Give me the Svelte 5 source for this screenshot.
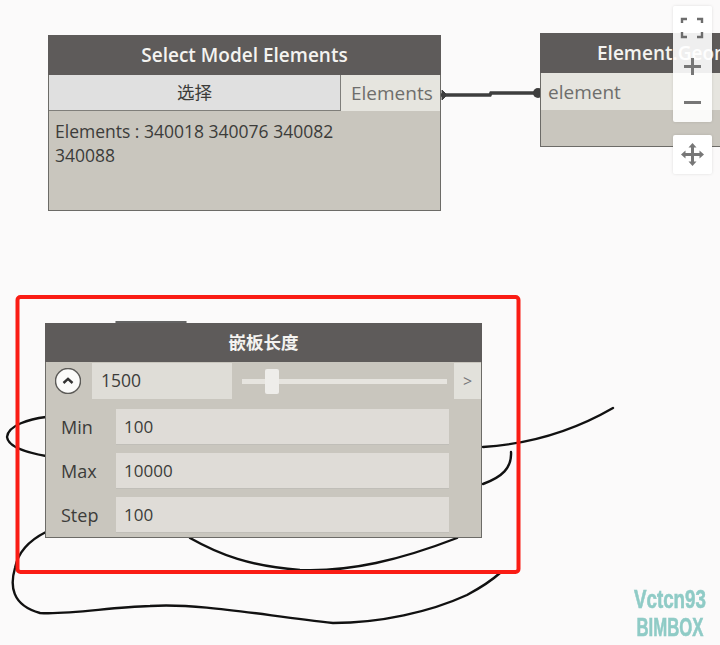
<script>
  let rows = [
    { label: 'Min', value: '100' },
    { label: 'Max', value: '10000' },
    { label: 'Step', value: '100' }
  ]
</script>

<main class="canvas">
  <svg class="ink" width="720" height="645" viewBox="0 0 720 645" fill="none">
    <g stroke="#111" stroke-width="2.4" stroke-linecap="round">
      <path d="M116 322 H186" stroke="#333" stroke-width="1.5" />
      <path d="M46 417 C30 419 8 425 7 437 C8 447 28 453 46 456" />
      <path d="M483 447 C530 444 575 430 613 408" />
      <path d="M511 452 C512 468 502 477 483 484" />
      <path d="M46 532 C30 540 18 552 15 568 C10 585 11 605 40 613 C70 615 110 607 150 606 C200 603 260 615 333 623 C380 623 430 612 467 595 C480 588 490 582 500 573" />
      <path d="M190 538 C220 555 250 566 300 570 C350 572 400 560 457 538" />
    </g>
    <g stroke="#3e3e3e" fill="#3e3e3e">
      <path d="M441 95 H490 L491 93 H540" stroke-width="3.5" />
      <path d="M442 90 L447 95 L442 100 Z" stroke-width="1" />
      <circle cx="538" cy="93" r="5" stroke="none" />
    </g>
    <rect x="17.5" y="297" width="501" height="275" rx="3" stroke="#fa1c14" stroke-width="4" />
  </svg>

  <section class="node select">
    <h2>Select Model Elements</h2>
    <div class="ports">
      <button class="pick">选择</button>
      <span class="port out">Elements</span>
    </div>
    <p class="preview">Elements : 340018 340076 340082<br />340088</p>
  </section>

  <section class="node geometry">
    <h2>Element.Geometry</h2>
    <div class="ports">
      <span class="port in">element</span>
    </div>
  </section>

  <section class="node slider">
    <h2>嵌板长度</h2>
    <div class="slide-row">
      <span class="toggle">
        <svg width="26" height="26" viewBox="0 0 26 26">
          <circle cx="13" cy="13" r="12.5" fill="#fbfbfa" stroke="#5c5b58" stroke-width="1.5" />
          <path d="M8.5 15 L13 10.8 L17.5 15" fill="none" stroke="#333" stroke-width="2.4" />
        </svg>
      </span>
      <span class="value">1500</span>
      <span class="track"><i class="thumb"></i></span>
      <span class="more">&gt;</span>
    </div>
    <div class="fields">
      {#each rows as row}
        <label>{row.label}</label>
        <span class="field">{row.value}</span>
      {/each}
    </div>
  </section>

  <div class="zoom-panel">
    <svg width="39" height="39" viewBox="0 0 39 39" fill="none" stroke="#6d6d6d" stroke-width="2.4">
      <path d="M9 17 V13 H14 M24 13 H29 V17 M29 26 V31 H24 M14 31 H9 V26" />
    </svg>
    <svg width="39" height="39" viewBox="0 0 39 39" fill="none" stroke="#777" stroke-width="3">
      <path d="M19.5 13 V30 M11 21.5 H28" />
    </svg>
    <svg width="39" height="38" viewBox="0 0 39 38" fill="none" stroke="#777" stroke-width="3">
      <path d="M11 18.5 H28" />
    </svg>
  </div>

  <div class="pan-panel">
    <svg width="39" height="39" viewBox="0 0 39 39" fill="#777">
      <path d="M19.5 8 L23.5 12.5 H21 V18 H26.5 V15.5 L31 19.5 L26.5 23.5 V21 H21 V26.5 H23.5 L19.5 31 L15.5 26.5 H18 V21 H12.5 V23.5 L8 19.5 L12.5 15.5 V18 H18 V12.5 H15.5 Z" />
    </svg>
  </div>

  <div class="mark">
    <span>Vctcn93</span>
    <span>BIMBOX</span>
  </div>
</main>

<style>
  :global(body) {
    margin: 0;
    background: #fbfafa;
  }

  .canvas {
    position: relative;
    width: 720px;
    height: 645px;
    overflow: hidden;
    font-family: "Open Sans", "Noto Sans CJK SC", sans-serif;
    font-size: 16px;
    color: #3c3c3a;
    filter: blur(0.45px);
  }

  .ink {
    position: absolute;
    left: 0;
    top: 0;
  }

  .node {
    position: absolute;
    box-sizing: border-box;
    display: flex;
    flex-direction: column;
    background: #c9c6be;
    border: 1px solid #6c6b67;
    border-top: 0;
  }

  .node h2 {
    margin: 0 -1px;
    height: 40px;
    line-height: 40px;
    flex: none;
    background: #5e5b5a;
    color: #f4f3f0;
    font-size: 19px;
    font-weight: 600;
    text-align: center;
    white-space: nowrap;
  }

  .select {
    left: 48px;
    top: 35px;
    width: 393px;
    height: 176px;
  }

  .ports {
    display: flex;
    height: 36px;
    flex: none;
  }

  .pick {
    width: 292px;
    padding: 0 0 2px;
    border: 0;
    border-right: 1px solid #7f7e7a;
    border-bottom: 1px solid #7f7e7a;
    background: #e0e0e0;
    color: #3c3c3a;
    font: inherit;
    font-size: 17.5px;
  }

  .port {
    flex: 1;
    background: #e6e5df;
    color: #6e6e6c;
    font-size: 19px;
    line-height: 36px;
  }

  .out {
    padding-left: 10px;
  }

  .preview {
    margin: 0;
    padding: 8px 6px;
    line-height: 24px;
    font-size: 17.5px;
  }

  .geometry {
    left: 540px;
    top: 33px;
    width: 240px;
    height: 114px;
  }

  .geometry .ports {
    height: 37px;
  }

  .geometry h2 {
    text-align: left;
    padding-left: 57px;
  }

  .in {
    padding-left: 7px;
    line-height: 38px;
  }

  .slider {
    left: 45px;
    top: 323px;
    width: 437px;
    height: 215px;
  }

  .slider h2 {
    height: 39px;
    line-height: 39px;
    font-size: 17.5px;
    font-weight: 700;
  }

  .slide-row {
    display: flex;
    align-items: center;
    height: 38px;
    flex: none;
  }

  .toggle {
    display: flex;
    width: 26px;
    margin-left: 9px;
  }

  .value {
    box-sizing: border-box;
    width: 140px;
    height: 36px;
    margin-left: 11px;
    padding-left: 9px;
    background: #dfddd7;
    font-size: 17.5px;
    line-height: 35px;
  }

  .track {
    position: relative;
    width: 205px;
    height: 5px;
    margin-left: 10px;
    background: #e6e4df;
  }

  .thumb {
    position: absolute;
    left: 23px;
    top: -10px;
    width: 14px;
    height: 25px;
    background: #eeedea;
    border-radius: 2px;
  }

  .more {
    width: 27px;
    height: 36px;
    margin-left: 7px;
    background: #e2e1db;
    color: #77777a;
    font-size: 16px;
    line-height: 36px;
    text-align: center;
  }

  .fields {
    display: grid;
    grid-template-columns: 70px 333px;
    grid-auto-rows: 36px;
    row-gap: 8px;
    padding-top: 9px;
  }

  .fields label {
    padding-left: 15px;
    font-size: 18px;
    line-height: 37px;
  }

  .field {
    padding-left: 8px;
    background: #dfdcd7;
    border-bottom: 1px solid #c0beb8;
    font-size: 17px;
    line-height: 35px;
  }

  .zoom-panel,
  .pan-panel {
    position: absolute;
    left: 673px;
    width: 39px;
    display: flex;
    flex-direction: column;
    background: rgba(255, 255, 255, 0.9);
    border-radius: 2px;
    box-shadow: 0 0 3px rgba(0, 0, 0, 0.12);
  }

  .zoom-panel {
    top: 6px;
    height: 116px;
  }

  .pan-panel {
    top: 135px;
    height: 39px;
    background: #fff;
  }

  .mark {
    position: absolute;
    left: 614px;
    top: 585px;
    width: 112px;
    display: flex;
    flex-direction: column;
    align-items: center;
    color: #8fcbc6;
    font-family: "Liberation Sans", sans-serif;
    font-size: 25px;
    font-weight: 700;
    line-height: 28px;
    -webkit-text-stroke: 0.6px #8fcbc6;
  }

  .mark span:first-child {
    transform: scaleX(0.75);
  }

  .mark span:last-child {
    transform: scaleX(0.67);
  }
</style>
